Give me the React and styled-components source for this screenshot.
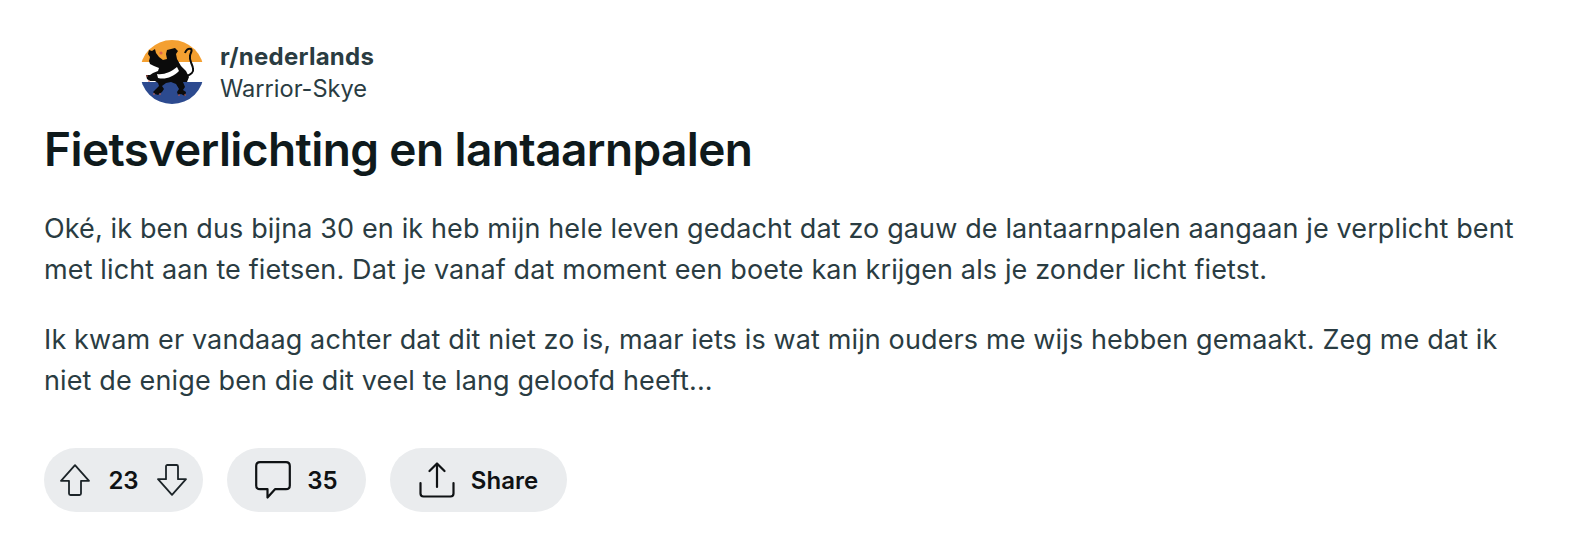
import React from 'react';
import styled, { createGlobalStyle } from 'styled-components';

const GlobalStyle = createGlobalStyle`
  html, body {
    margin: 0;
    background: #fff;
    font-family: Inter, "Liberation Sans", sans-serif;
  }
`;

function Avatar() {
  return (
    <AvatarSvg viewBox="0 0 64 64">
      <defs>
        <clipPath id="round">
          <circle cx="32" cy="32" r="32" />
        </clipPath>
      </defs>
      <g clipPath="url(#round)">
        <rect width="64" height="22" fill="#f4a031" />
        <rect y="22" width="64" height="20" fill="#fff" />
        <rect y="42" width="64" height="22" fill="#2c4a8f" />
        <path
          fill="none"
          stroke="#0b0b0b"
          strokeWidth="2"
          d="M46 36c5-1 8-4 7-8-1-5-4-7-3-12 0-3 3-5 1-7-3-1-5 1-6 4"
        />
        <path
          fill="#0b0b0b"
          d="M27 10L35 8L38 11L36 14L37 19L41 26L46 31L49 37L47 42L43 42L45 47L43 50L46 52L45 56L41 54L38 55L37 52L39 49L36 44L31 42L26 43L22 46L24 49L22 52L18 55L15 54L13 52L16 49L19 46L18 43L15 41L10 41L7 39L6 35L10 35L13 33L18 31L19 28L14 26L10 24L9 21L10 17L8 14L9 10L12 11L15 9L16 13L19 17L23 20L27 19L26 14Z"
        />
        <path fill="#fff" d="M17 34C24 35 31 32 37 27L39 31C33 37 25 40 18 38Z" />
        <g fill="#d9604c">
          <circle cx="21" cy="13" r="1.600" />
          <circle cx="7" cy="36" r="0.800" />
          <circle cx="9" cy="41" r="0.800" />
          <circle cx="14" cy="54" r="0.800" />
          <circle cx="20" cy="54" r="0.800" />
          <circle cx="39" cy="55" r="0.800" />
          <circle cx="45" cy="55" r="0.800" />
        </g>
      </g>
    </AvatarSvg>
  );
}

function ArrowUp() {
  return (
    <svg width="30" height="32" viewBox="0 0 30 32" fill="none" stroke="#1c2428" strokeWidth="1.800" strokeLinejoin="round">
      <path d="M15 1.200L1 16.800H9V29.500Q9 31 10.500 31H19.500Q21 31 21 29.500V16.800H29Z" />
    </svg>
  );
}

function ArrowDown() {
  return (
    <svg width="30" height="32" viewBox="0 0 30 32" fill="none" stroke="#1c2428" strokeWidth="1.800" strokeLinejoin="round">
      <path d="M15 30.800L1 15.200H9V2.500Q9 1 10.500 1H19.500Q21 1 21 2.500V15.200H29Z" />
    </svg>
  );
}

function CommentIcon() {
  return (
    <svg width="36" height="38" viewBox="0 0 36 38" fill="none" stroke="#0f1214" strokeWidth="2.200" strokeLinejoin="round">
      <path d="M5 1.200H31Q34.800 1.200 34.800 5V24.500Q34.800 28.200 31 28.200H20L12.500 36.500V28.200H5Q1.200 28.200 1.200 24.500V5Q1.200 1.200 5 1.200Z" />
    </svg>
  );
}

function ShareIcon() {
  return (
    <svg width="36" height="36" viewBox="0 0 36 36" fill="none" stroke="#0f1214" strokeWidth="2.200" strokeLinecap="round" strokeLinejoin="round">
      <path d="M18 25V1.500M10.500 9L18 1.500L25.500 9" />
      <path d="M1.500 21V31.500Q1.500 34.500 4.500 34.500H31.500Q34.500 34.500 34.500 31.500V21" />
    </svg>
  );
}

export default function App() {
  return (
    <Page>
      <GlobalStyle />
      <Header>
        <Avatar />
        <Meta>
          <Community>r/nederlands</Community>
          <Author>Warrior-Skye</Author>
        </Meta>
      </Header>
      <Title>Fietsverlichting en lantaarnpalen</Title>
      <Body>
        Oké, ik ben dus bijna 30 en ik heb mijn hele leven gedacht dat zo gauw de lantaarnpalen aangaan je verplicht bent
        met licht aan te fietsen. Dat je vanaf dat moment een boete kan krijgen als je zonder licht fietst.
      </Body>
      <Body>
        Ik kwam er vandaag achter dat dit niet zo is, maar iets is wat mijn ouders me wijs hebben gemaakt. Zeg me dat ik
        niet de enige ben die dit veel te lang geloofd heeft...
      </Body>
      <Actions>
        <Pill $width={159} $gap={18}>
          <ArrowUp />
          <Count>23</Count>
          <ArrowDown />
        </Pill>
        <Pill $width={139} $gap={16}>
          <CommentIcon />
          <Count>35</Count>
        </Pill>
        <Pill $width={177} $gap={16}>
          <ShareIcon />
          <Count>Share</Count>
        </Pill>
      </Actions>
    </Page>
  );
}

const Page = styled.div`
  width: 1576px;
  height: 550px;
  box-sizing: border-box;
  padding: 40px 44px 0;
  overflow: hidden;
`;

const Header = styled.div`
  display: flex;
  align-items: center;
  gap: 16px;
  padding-left: 96px;
`;

const AvatarSvg = styled.svg`
  width: 64px;
  height: 64px;
  flex: none;
`;

const Meta = styled.div`
  display: flex;
  flex-direction: column;
  gap: 2px;
  padding-top: 2px;
`;

const Community = styled.div`
  font-size: 24px;
  line-height: 30px;
  font-weight: 650;
  letter-spacing: 0.25px;
  color: #2a3c42;
`;

const Author = styled.div`
  font-size: 23.600px;
  line-height: 30px;
  color: #2a3c42;
`;

const Title = styled.h1`
  margin: 15px 0 0;
  font-size: 46px;
  line-height: 60px;
  font-weight: 600;
  letter-spacing: -0.6px;
  color: #0f1a1c;
`;

const Body = styled.p`
  margin: 29px 0 0;
  width: 1488px;
  font-size: 27px;
  line-height: 41px;
  letter-spacing: 0.13px;
  color: #2a3c42;
`;

const Actions = styled.div`
  display: flex;
  gap: 24px;
  margin-top: 47px;
`;

const Pill = styled.div`
  width: ${(p) => p.$width}px;
  height: 64px;
  border-radius: 32px;
  background: #eaecee;
  display: flex;
  align-items: center;
  justify-content: center;
  gap: ${(p) => p.$gap}px;
`;

const Count = styled.span`
  font-size: 24px;
  font-weight: 600;
  color: #0f1214;
`;
